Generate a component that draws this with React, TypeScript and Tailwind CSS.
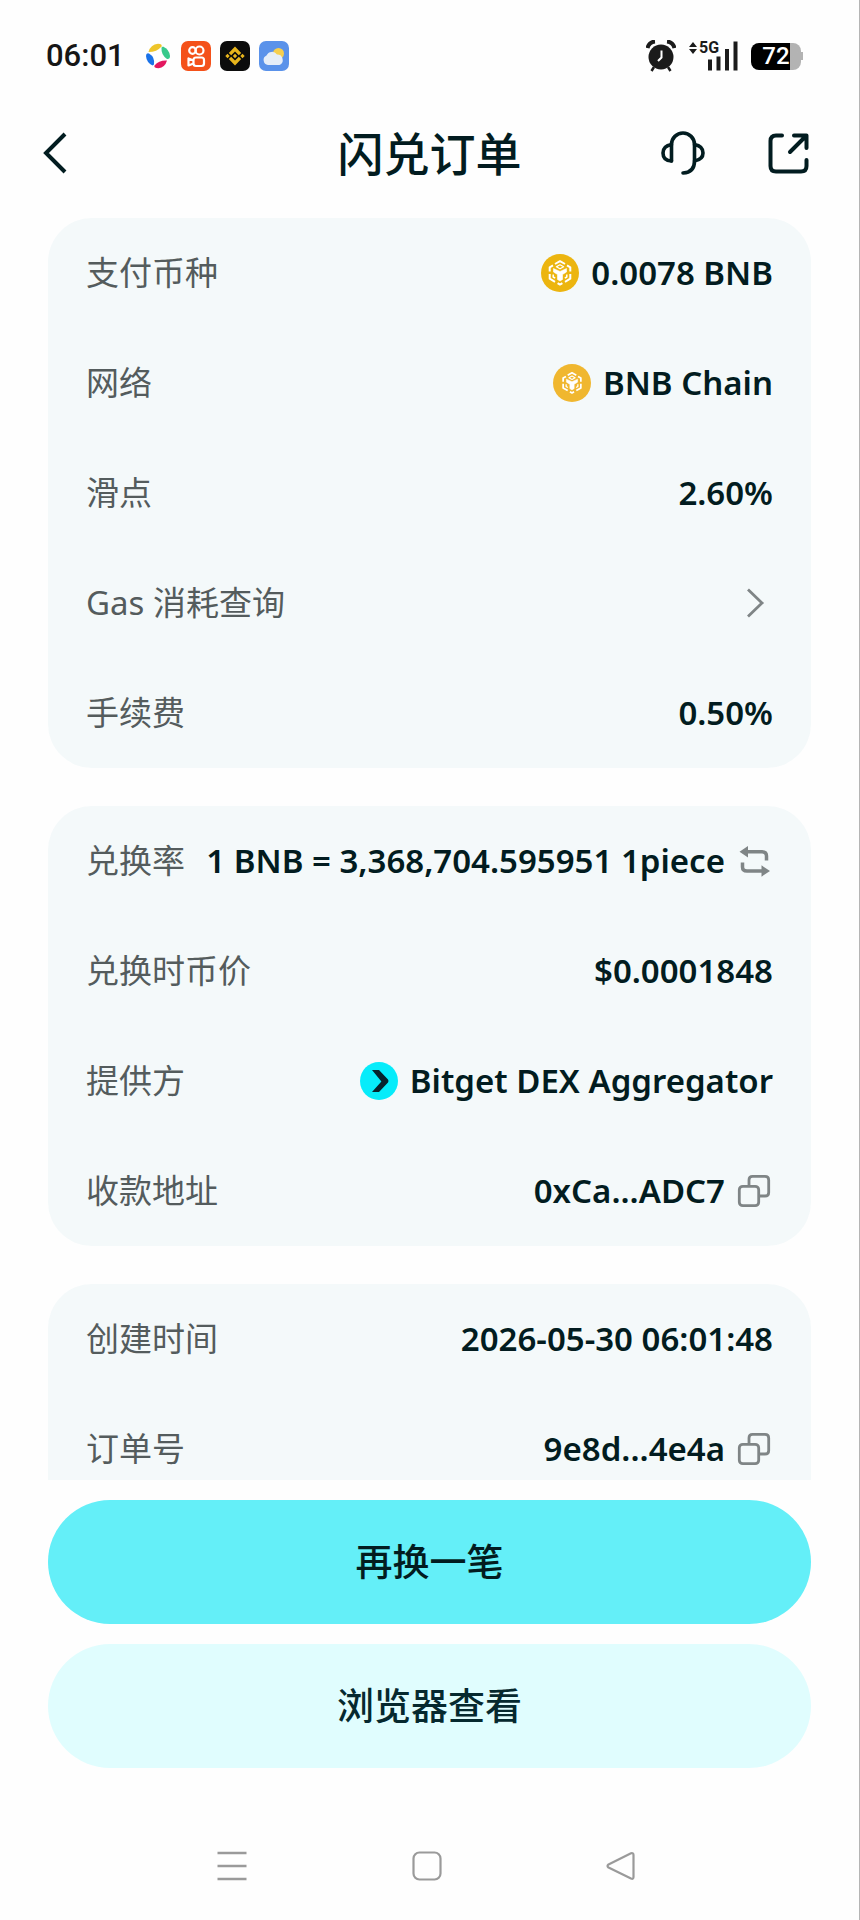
import React from 'react'

interface RowProps {
  label: string
  children: React.ReactNode
}

const Row = ({ label, children }: RowProps) => (
  <div className="flex h-[110px] items-center justify-between">
    <dt className="whitespace-nowrap text-[33px] text-[#545c5d]">{label}</dt>
    <dd className="flex items-center gap-3 whitespace-nowrap text-[33px] font-semibold text-[#021c20]">
      {children}
    </dd>
  </div>
)

const Card = ({ children }: { children: React.ReactNode }) => (
  <dl className="shrink-0 rounded-[44px] bg-[#f4f9fa] px-[38px] last:pb-12">{children}</dl>
)

const BnbIcon = ({ small = false }: { small?: boolean }) => (
  <svg className="size-[38px]" viewBox="0 0 38 38" aria-hidden="true">
    <circle cx="19" cy="19" r="19" fill={small ? '#f0b72f' : '#ecb50f'} />
    <g
      transform={small ? 'translate(19 19) scale(0.86)' : 'translate(19 19)'}
      fill="none"
      stroke="#fff"
      strokeWidth="2"
      strokeLinejoin="round"
    >
      <path d="M-5 -9 L0 -11.8 L5 -9 M-7 -7.6 L-10.3 -5.7 V-1.5 M7 -7.6 L10.3 -5.7 V-1.5 M-10.3 1 V5.7 L-5 8.8 M10.3 1 V5.7 L5 8.8 M-2.4 10.2 L0 11.6 L2.4 10.2" />
      <path d="M-3.6 -6.2 L0 -8.2 L3.6 -6.2 L0 -4.2 Z" strokeWidth="1.3" />
      <path d="M-6.5 -4.5 L0 -1.5 L6.5 -4.5 V-1 L2.5 1.5 V6.5 L0 8 L-2.5 6.5 V1.5 L-6.5 -1 Z" fill="#fff" strokeWidth="0.6" />
      <path d="M-6.8 1.5 V4 L-4.8 5.2 M6.8 1.5 V4 L4.8 5.2" strokeWidth="1.5" />
    </g>
  </svg>
)

const BitgetIcon = () => (
  <svg className="size-[38px]" viewBox="0 0 38 38" aria-hidden="true">
    <circle cx="19" cy="19" r="19" fill="#06ecfa" />
    <path d="M12 8 H19 L28 17.4 Q29 19 28 20.4 L19 30 H12 L21.4 19.4 Z" fill="#06232c" />
  </svg>
)

const CopyButton = ({ label }: { label: string }) => (
  <button type="button" aria-label={label} className="mr-0.5">
    <svg className="size-[34px]" viewBox="0 0 34 34" fill="none" stroke="#7f8586" strokeWidth="2.8">
      <rect x="2.3" y="12.3" width="19.4" height="19.4" rx="3.5" />
      <path d="M12 12 V6 Q12 2.3 15.5 2.3 H28 Q31.7 2.3 31.7 6 V18.4 Q31.7 22 28 22 H22" />
    </svg>
  </button>
)

const StatusBar = () => (
  <div className="flex h-28 shrink-0 items-center justify-between pl-[46px] pr-[56px]">
    <div className="flex items-center gap-[9px]">
      <span className="mr-2.5 font-[Roboto] text-[31px] font-medium text-[#161616]">06:01</span>
      <svg className="size-7" viewBox="0 0 28 28" aria-hidden="true">
        <path d="M4.5 10 Q6.5 2.5 14 1.8 Q18.5 1.8 17.5 4.5 Q13 10 4.5 10 Z" fill="#eec52a" />
        <path d="M19 4.5 Q25.5 7.5 26 14 Q26 17.5 23 17 Q17 13 17.5 5.5 Z" fill="#37c98b" />
        <path d="M23 18.5 Q21 25.5 14.5 26.2 Q9.5 26.2 10.5 23.5 Q15 18 23 18.5 Z" fill="#e3175f" />
        <path d="M8.5 23.5 Q2.5 20.5 2 14 Q2 10.5 5 11.5 Q11 15 10 22.5 Z" fill="#1a72e8" />
      </svg>
      <svg className="size-[30px]" viewBox="0 0 30 30" aria-hidden="true">
        <rect width="30" height="30" rx="7" fill="#f4511a" />
        <g fill="none" stroke="#fff" strokeWidth="2.2">
          <circle cx="11.5" cy="9.5" r="3.3" />
          <circle cx="18.5" cy="9.5" r="4" />
          <rect x="12.5" y="16.5" width="10.5" height="8.5" rx="2.5" />
          <path d="M12.5 19.5 L7.5 17.5 V24.5 L12.5 22.5" strokeLinejoin="round" />
        </g>
      </svg>
      <svg className="size-[30px]" viewBox="0 0 30 30" aria-hidden="true">
        <rect width="30" height="30" rx="7" fill="#0c0c0c" />
        <path d="M8.8 12 L15 5.5 L21.2 12 L18.8 14.3 L15 10.5 L11.2 14.3 Z M8.8 18 L11.2 15.7 L15 19.5 L18.8 15.7 L21.2 18 L15 24.5 Z M15 12.8 L17.2 15 L15 17.2 L12.8 15 Z M7.5 12.8 L9.7 15 L7.5 17.2 L5.3 15 Z M22.5 12.8 L24.7 15 L22.5 17.2 L20.3 15 Z" fill="#e8b51c" />
      </svg>
      <svg className="size-[30px]" viewBox="0 0 30 30" aria-hidden="true">
        <rect width="30" height="30" rx="7" fill="#5a92ea" />
        <circle cx="19.5" cy="12.5" r="5.5" fill="#f6cf4e" />
        <path d="M9 24 A5 5 0 0 1 7.5 14.5 A6 6 0 0 1 18 13.5 A5.5 5.5 0 0 1 20.5 24 Z" fill="#e6eef8" />
      </svg>
    </div>

    <div className="flex items-center">
      <svg className="h-8 w-[30px]" viewBox="0 0 30 32" aria-hidden="true">
        <circle cx="15" cy="17" r="12.5" fill="#1b1b1b" />
        <path d="M1.5 8 Q3 2 9 1.5 M28.5 8 Q27 2 21 1.5" stroke="#1b1b1b" strokeWidth="4" fill="none" />
        <path d="M8 27 L5.5 31 M22 27 L24.5 31" stroke="#1b1b1b" strokeWidth="2.5" />
        <path d="M15.5 10.5 V17.5 L12 21" stroke="#fff" strokeWidth="2" fill="none" />
      </svg>
      <div className="relative ml-3 h-8 w-[52px]">
        <svg className="size-full" viewBox="0 0 52 32" aria-hidden="true">
          <path d="M1 7 L5 2 L9 7 Z M1 9 L5 14 L9 9 Z" fill="#1b1b1b" />
          <path d="M20 19.5 h4 v11 h-4 Z M28.5 16.5 h4 v14 h-4 Z M37 9 h4 v21.5 h-4 Z M45.5 1.5 h4 v29 h-4 Z" fill="#1b1b1b" />
        </svg>
        <span className="absolute left-[11px] top-0 font-[Roboto] text-[16px] font-bold leading-4 text-[#1b1b1b]">5G</span>
      </div>
      <div className="ml-[11px] flex items-center">
        <div className="flex h-[27px] w-[50px] items-center justify-center rounded-lg bg-linear-to-r from-black from-78% to-[#b3b3b3] to-78% font-[Roboto] text-[24px] font-medium text-white">
          72
        </div>
        <div className="h-2 w-0.5 bg-[#b3b3b3]" />
      </div>
    </div>
  </div>
)

const Header = () => (
  <header className="grid h-[82px] shrink-0 grid-cols-[1fr_auto_1fr] items-center px-[42px]">
    <button type="button" aria-label="返回" className="justify-self-start">
      <svg className="h-11 w-7" viewBox="0 0 28 44" fill="none" stroke="#021c20" strokeWidth="4">
        <path d="M23 3 L4 22 L23 41" />
      </svg>
    </button>
    <h1 className="text-[46px] font-medium leading-none text-[#021c20]">闪兑订单</h1>
    <div className="mr-2 flex items-center gap-[63px] justify-self-end">
      <button type="button" aria-label="客服">
        <svg
          className="size-11"
          viewBox="0 0 44 44"
          fill="none"
          stroke="#021c20"
          strokeWidth="3.6"
          strokeLinecap="round"
          strokeLinejoin="round"
        >
          <path d="M10.5 30 V13.5 A11.5 11.5 0 0 1 33.5 13.5 V30 Q33.5 41.5 22 42" />
          <path d="M10.5 13.5 Q2 15 2 22 Q2 29.5 10.5 30 M33.5 13.5 Q42 15 42 22 Q42 28.5 33.5 30" />
        </svg>
      </button>
      <button type="button" aria-label="分享">
        <svg
          className="size-[41px]"
          viewBox="0 0 41 41"
          fill="none"
          stroke="#021c20"
          strokeWidth="4"
          strokeLinecap="round"
          strokeLinejoin="round"
        >
          <path d="M14 2.5 H8 Q2.5 2.5 2.5 8 V33 Q2.5 38.5 8 38.5 H33 Q38.5 38.5 38.5 33 V27" />
          <path d="M26 2.5 H38.5 V15 M37.5 3.5 L22 19" />
        </svg>
      </button>
    </div>
  </header>
)

const NavBar = () => (
  <nav className="flex h-[70px] shrink-0 items-start justify-between pl-[216px] pr-[222px]">
    <button type="button" aria-label="最近任务">
      <svg className="size-8" viewBox="0 0 32 32" stroke="#9a9a9a" strokeWidth="2.4">
        <path d="M1.5 3 H30.5 M1.5 16 H30.5 M1.5 29 H30.5" />
      </svg>
    </button>
    <button type="button" aria-label="主屏幕">
      <svg className="size-8" viewBox="0 0 32 32" fill="none" stroke="#9a9a9a" strokeWidth="2.2">
        <rect x="2.5" y="2.5" width="27" height="27" rx="6" />
      </svg>
    </button>
    <button type="button" aria-label="返回上一级">
      <svg className="size-8" viewBox="0 0 32 32" fill="none" stroke="#9a9a9a" strokeWidth="2.2" strokeLinejoin="round">
        <path d="M3.5 14.5 L26 3.2 Q28.5 2.5 28.5 5 V27 Q28.5 29.5 26 28.5 L3.5 17.5 Q1.5 16 3.5 14.5 Z" />
      </svg>
    </button>
  </nav>
)

export default function App() {
  return (
    <div className="flex h-screen flex-col border-r border-[#b5b5b5] bg-[#fefefe] font-['Noto_Sans','Noto_Sans_CJK_SC',sans-serif]">
      <StatusBar />
      <Header />

      {/* Order details */}
      <main className="mt-6 flex min-h-0 flex-1 flex-col gap-[38px] overflow-y-auto px-12 [scrollbar-width:none]">
        <Card>
          <Row label="支付币种">
            <BnbIcon />
            <span>0.0078 BNB</span>
          </Row>
          <Row label="网络">
            <BnbIcon small />
            <span>BNB Chain</span>
          </Row>
          <Row label="滑点">2.60%</Row>
          <Row label="Gas 消耗查询">
            <button type="button" aria-label="Gas 消耗查询" className="mr-2">
              <svg className="h-8 w-5" viewBox="0 0 20 32" fill="none" stroke="#7f8586" strokeWidth="2.8">
                <path d="M3 2.5 L17 16 L3 29.5" />
              </svg>
            </button>
          </Row>
          <Row label="手续费">0.50%</Row>
        </Card>

        <Card>
          <Row label="兑换率">
            <span>1 BNB = 3,368,704.595951 1piece</span>
            <button type="button" aria-label="切换兑换率" className="mr-0.5">
              <svg className="size-[34px]" viewBox="0 0 34 34" fill="none" stroke="#7f8586" strokeWidth="3.5">
                <path d="M9 7.7 H25 Q29.5 7.7 29.5 12 V16.5" />
                <path d="M26 27 H10 Q5.5 27 5.5 23 V18.5" />
                <path d="M11 2 V13.4 L2.5 7.7 Z M24.5 21.3 V32.7 L33 27 Z" fill="#7f8586" stroke="none" />
              </svg>
            </button>
          </Row>
          <Row label="兑换时币价">$0.0001848</Row>
          <Row label="提供方">
            <BitgetIcon />
            <span>Bitget DEX Aggregator</span>
          </Row>
          <Row label="收款地址">
            <span>0xCa...ADC7</span>
            <CopyButton label="复制收款地址" />
          </Row>
        </Card>

        <Card>
          <Row label="创建时间">2026-05-30 06:01:48</Row>
          <Row label="订单号">
            <span>9e8d...4e4a</span>
            <CopyButton label="复制订单号" />
          </Row>
        </Card>
      </main>

      {/* Actions */}
      <div className="flex shrink-0 flex-col gap-5 px-12 pb-[82px] pt-5">
        <button type="button" className="h-[124px] rounded-full bg-[#64eff8] text-[37px] font-medium text-[#021c20]">
          再换一笔
        </button>
        <button type="button" className="h-[124px] rounded-full bg-[#e0fdfe] text-[37px] font-medium text-[#06292f]">
          浏览器查看
        </button>
      </div>

      <NavBar />
    </div>
  )
}
